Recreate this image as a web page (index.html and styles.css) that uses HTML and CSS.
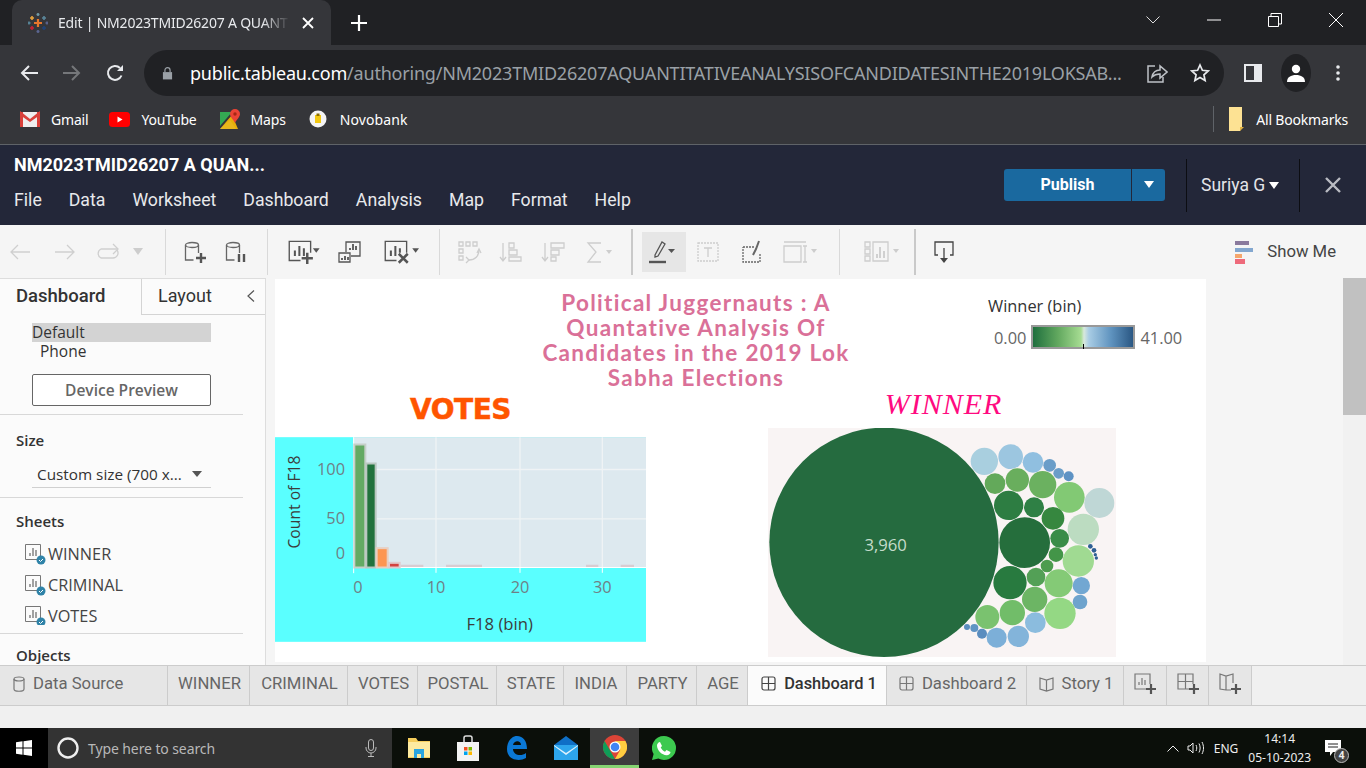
FILE: index.html
```html
<!DOCTYPE html>
<html lang="en">
  <head>
    <meta charset="UTF-8" />
    <title>Edit | NM2023TMID26207 A QUANTITATIVE</title>
    <link rel="stylesheet" href="styles.css">
  </head>
  <body>
    <div class="tabstrip">
      <div class="browser-tab">
        <svg class="favicon" viewBox="0 0 20 20" width="20" height="20" fill="none" stroke-width="1.6">
          <path d="M10 6v8M6 10h8" stroke="#e8762c" stroke-width="2.2"/>
          <path d="M4 3v4M2 5h4" stroke="#e8a33d"/><path d="M16 3v4M14 5h4" stroke="#5b879b"/>
          <path d="M10 0v3M8.5 1.500h3" stroke="#7099a6"/><path d="M1 8.500v3M-.5 10h3" stroke="#59879b"/>
          <path d="M19 8.500v3M17.500 10h3" stroke="#5b6591"/><path d="M4 13v4M2 15h4" stroke="#c72035"/>
          <path d="M16 13v4M14 15h4" stroke="#1f447a"/><path d="M10 17v3M8.500 18.500h3" stroke="#5b6591"/>
        </svg>
        <span class="tab-title">Edit | NM2023TMID26207 A QUANT</span>
        <svg viewBox="0 0 12 12" width="12" height="12" stroke="#fff" stroke-width="1.800"><path d="M1 1l10 10M11 1L1 11"/></svg>
      </div>
      <svg class="new-tab" viewBox="0 0 16 16" width="16" height="16" stroke="#fff" stroke-width="2.200"><path d="M8 0v16M0 8h16"/></svg>
      <div class="window-controls">
        <svg viewBox="0 0 14 8" width="14" height="8" fill="none" stroke="#ddd"><path d="M.5.500L7 7l6.500-6.500"/></svg>
        <svg viewBox="0 0 14 14" width="14" height="14" stroke="#fff"><path d="M0 7h14"/></svg>
        <svg viewBox="0 0 14 14" width="14" height="14" fill="none" stroke="#fff"><path d="M.5 3.500h10v10H.5zM3 3.500V.500h10.500V11h-3"/></svg>
        <svg viewBox="0 0 14 14" width="14" height="14" stroke="#fff"><path d="M0 0l14 14M14 0L0 14"/></svg>
      </div>
    </div>

    <div class="chrome-toolbar">
      <svg viewBox="0 0 18 18" width="18" height="18" fill="none" stroke="#e8eaed" stroke-width="2"><path d="M18 9H2M9 2L2 9l7 7"/></svg>
      <svg viewBox="0 0 18 18" width="18" height="18" fill="none" stroke="#75777a" stroke-width="2"><path d="M0 9h16M9 2l7 7-7 7"/></svg>
      <svg viewBox="0 0 18 18" width="18" height="18" fill="none" stroke="#e8eaed" stroke-width="2"><path d="M15.500 11.500A7 7 0 1 1 14 4"/><path d="M17 1v6h-6" fill="#e8eaed" stroke="none"/></svg>
      <div class="omnibox">
        <svg viewBox="0 0 12 14" width="11" height="14" fill="#9aa0a6"><path d="M1 6h10v8H1z"/><path d="M3.200 6V4a2.800 2.800 0 0 1 5.600 0v2" fill="none" stroke="#9aa0a6" stroke-width="1.300"/></svg>
        <span class="url"><b>public.tableau.com</b>/authoring/NM2023TMID26207AQUANTITATIVEANALYSISOFCANDIDATESINTHE2019LOKSAB...</span>
        <svg class="omni-share" viewBox="0 0 22 22" width="22" height="22" fill="none" stroke="#bdc1c6" stroke-width="1.500"><path d="M9 4H2v16h15v-5"/><path d="M6 15c1-5 4-7 8-7V4l7 6-7 6v-4c-3 0-6 1-8 3z"/></svg>
        <svg viewBox="0 0 20 20" width="20" height="20" fill="none" stroke="#e8eaed" stroke-width="1.700"><path d="M10 2l2.400 5.300 5.800.6-4.300 3.900 1.200 5.700-5.100-2.900-5.100 2.900 1.200-5.700L1.800 7.900l5.800-.6z"/></svg>
      </div>
      <svg class="side-panel" viewBox="0 0 18 18" width="18" height="18"><path fill="#e8eaed" d="M0 0h18v18H0z"/><path fill="#35363a" d="M2 2h8v14H2z"/></svg>
      <div class="avatar"><svg viewBox="0 0 18 18" width="18" height="18" fill="#fff"><circle cx="9" cy="5" r="4.200"/><path d="M0 18c0-5 4-7 9-7s9 2 9 7z"/></svg></div>
      <svg viewBox="0 0 4 16" width="4" height="16" fill="#e8eaed"><circle cx="2" cy="2" r="1.800"/><circle cx="2" cy="8" r="1.800"/><circle cx="2" cy="14" r="1.800"/></svg>
    </div>

    <div class="bookmarks">
      <span class="bookmark bookmark-gmail">
        <svg viewBox="0 0 20 16" width="20" height="16"><path fill="#eee" d="M0 1h20v15H0z"/><path fill="#d8403a" d="M0 1h3v15H0zM17 1h3v15h-3z"/><path fill="#d8403a" d="M0 0l10 8 10-8v4l-10 7L0 4z"/></svg>
        Gmail
      </span>
      <span class="bookmark">
        <svg viewBox="0 0 21 15" width="21" height="15"><rect width="21" height="15" rx="3.500" fill="#f00"/><path fill="#fff" d="M8.500 4.500l5 3-5 3z"/></svg>
        YouTube
      </span>
      <span class="bookmark">
        <svg viewBox="0 0 20 20" width="20" height="20"><path fill="#34a853" d="M0 3h12L0 17z"/><path fill="#4285f4" d="M0 20l10-9 6 9z"/><path fill="#fbbc04" d="M0 20L12 6l6 14z" opacity=".9"/><path fill="#ea4335" d="M15 0a5 5 0 0 1 5 5c0 3-3 5-5 9-2-4-5-6-5-9a5 5 0 0 1 5-5z"/><circle cx="15" cy="5" r="1.700" fill="#a52714"/></svg>
        Maps
      </span>
      <span class="bookmark bookmark-novo">
        <svg viewBox="0 0 18 18" width="18" height="18"><circle cx="9" cy="9" r="8.500" fill="#f4f4f4"/><path fill="#f2c811" d="M6 5h6v8H6z"/><path fill="#8a6d00" d="M7.500 3.500h3V6h-3z"/></svg>
        Novobank
      </span>
      <span class="bookmarks-end">
        <svg viewBox="0 0 16 24" width="16" height="24"><path fill="#fde293" d="M1 0h13v20l-2 4H1z"/><path fill="#e3b341" d="M12 20h4l-4 4z"/></svg>
        All Bookmarks
      </span>
    </div>

    <header class="app-header">
      <div class="app-title-block">
        <div class="app-title">NM2023TMID26207 A QUAN...</div>
        <nav class="app-menu">
          <span>File</span><span>Data</span><span>Worksheet</span><span>Dashboard</span><span>Analysis</span><span>Map</span><span>Format</span><span>Help</span>
        </nav>
      </div>
      <div class="app-actions">
        <div class="publish">
          <span class="publish-main">Publish</span>
          <span class="publish-caret"><i class="caret-white"></i></span>
        </div>
        <div class="user">Suriya G <i class="caret-white"></i></div>
        <svg class="app-close" viewBox="0 0 16 16" width="16" height="16" stroke="#b9bbc2" stroke-width="2.400"><path d="M1 1l14 14M15 1L1 15"/></svg>
      </div>
    </header>

    <div class="tool-row">
      <span class="tool"><svg viewBox="0 0 24 24" fill="none" stroke="#cfcfcf" stroke-width="1.300"><path d="M22 12H3M10 5l-7 7 7 7"/></svg></span>
      <span class="tool"><svg viewBox="0 0 24 24" fill="none" stroke="#cfcfcf" stroke-width="1.300"><path d="M2 12h19M14 5l7 7-7 7"/></svg></span>
      <span class="tool"><svg viewBox="0 0 24 24" fill="none" stroke="#cfcfcf" stroke-width="1.300"><path d="M22 9H6a5 5 0 0 0 0 9h12a5 5 0 0 0 4-8"/><path d="M18 4l5 5-5 5" /></svg></span>
      <span class="tool"><i class="caret-grey"></i></span>
      <span class="tool"><i class="tool-sep"></i></span>
      <span class="tool"><svg viewBox="0 0 24 24" fill="none" stroke="#666" stroke-width="1.300"><ellipse cx="9" cy="5" rx="6.500" ry="2.500"/><path d="M2.500 5v15h8M15.500 5v8"/><path d="M18 13v10M13 18h10" stroke="#555" stroke-width="2.400"/></svg></span>
      <span class="tool"><svg viewBox="0 0 24 24" fill="none" stroke="#666" stroke-width="1.300"><ellipse cx="9" cy="5" rx="6.500" ry="2.500"/><path d="M2.500 5v15h8M15.500 5v8"/><path d="M15 14v8M20 14v8" stroke="#555" stroke-width="2.400"/></svg></span>
      <span class="tool"><i class="tool-sep"></i></span>
      <span class="tool tool-lg"><svg viewBox="0 0 24 24" fill="none" stroke="#555" stroke-width="1.200"><path d="M12 20H2V3h19v10"/><path d="M7 16v-5M11 16V7M15 16v-7" stroke-width="1.800"/><path d="M18 13v10M13 18h10" stroke-width="2.200"/><path d="M23 9h6l-3 4z" fill="#555" stroke="none"/></svg></span>
      <span class="tool"><svg viewBox="0 0 24 24" fill="none" stroke="#555" stroke-width="1.300"><path d="M8 12V2h14v14h-9"/><path d="M12 10V8M15 10V4M18 10V6" stroke-width="1.800"/><path d="M1 13h11v9H1z"/><path d="M4 20v-2M7 20v-4M10 20v-3" stroke-width="1.800"/></svg></span>
      <span class="tool tool-lg"><svg viewBox="0 0 24 24" fill="none" stroke="#555" stroke-width="1.200"><path d="M12 20H2V3h19v10"/><path d="M7 16v-5M11 16V7M15 13V9" stroke-width="1.800"/><path d="M14 14l8 8M22 14l-8 8" stroke-width="2.200"/><path d="M26 9h6l-3 4z" fill="#555" stroke="none"/></svg></span>
      <span class="tool"><i class="tool-sep"></i></span>
      <span class="tool"><svg viewBox="0 0 24 24" fill="none" stroke="#cdcdcd" stroke-width="1.300"><path d="M2 2h4v4H2zM9 2h4v4H9zM16 2h4v4h-4zM2 9h4v4H2zM2 16h4v4H2zM22 10c0 6-4 10-10 10"/><path d="M9 17l3 3-3 3M20 13l2-4 2 4"/></svg></span>
      <span class="tool"><svg viewBox="0 0 24 24" fill="none" stroke="#cdcdcd" stroke-width="1.300"><path d="M4 3v17M1 17l3 4 3-4"/><path d="M10 3h5v5h-5zM10 10h8v5h-8zM10 17h12v4H10z"/></svg></span>
      <span class="tool"><svg viewBox="0 0 24 24" fill="none" stroke="#cdcdcd" stroke-width="1.300"><path d="M4 3v17M1 17l3 4 3-4"/><path d="M10 3h13v5H10zM10 10h8v5h-8zM10 17h5v4h-5z"/></svg></span>
      <span class="tool"><svg viewBox="0 0 24 24" fill="none" stroke="#cdcdcd" stroke-width="1.300"><path d="M16 3H3l8 9-8 10h13"/><path d="M21 10h6l-3 4z" fill="#cdcdcd" stroke="none"/></svg></span>
      <span class="tool"><i class="tool-sep tool-sep-tall"></i></span>
      <span class="tool tool-active"><svg viewBox="0 0 24 24" fill="none" stroke="#555" stroke-width="1.300"><path d="M7 15L14 2l3 2-7 12-3 1z"/><path d="M1 22h17" stroke-width="2.400"/><path d="M20 9h7l-3.500 4z" fill="#555" stroke="none"/></svg></span>
      <span class="tool"><svg viewBox="0 0 24 24" fill="none" stroke="#cdcdcd" stroke-width="1.300" stroke-dasharray="2 1"><path d="M2 3h20v18H2z"/><path d="M8 8h8M12 8v9" stroke-dasharray="none"/></svg></span>
      <span class="tool"><svg viewBox="0 0 24 24" fill="none" stroke="#666" stroke-width="1.300"><path d="M3 7h11M20 14v8H3V7" stroke-dasharray="2 1"/><path d="M19 1l-3 8-3 6" stroke-width="2"/></svg></span>
      <span class="tool"><svg viewBox="0 0 24 24" fill="none" stroke="#cdcdcd" stroke-width="1.300"><path d="M1 2h22M1 6h17v16H1zM22 6v16M20 6h4M20 22h4"/><path d="M28 9h6l-3 4z" fill="#cdcdcd" stroke="none"/></svg></span>
      <span class="tool"><i class="tool-sep"></i></span>
      <span class="tool"><svg viewBox="0 0 24 24" fill="none" stroke="#cdcdcd" stroke-width="1.300"><path d="M0 2h5v5H0zM0 9h5v5H0zM0 16h5v5H0zM8 2h15v19H8z"/><path d="M12 18v-4M15 18V7M19 18v-7" stroke-width="1.800"/><path d="M28 9h6l-3 4z" fill="#cdcdcd" stroke="none"/></svg></span>
      <span class="tool"><i class="tool-sep tool-sep-tall"></i></span>
      <span class="tool"><svg viewBox="0 0 24 24" fill="none" stroke="#444" stroke-width="1.300"><path d="M6 15H3V2h18v13h-3M12 8v12"/><path d="M8 18h8l-4 5z" fill="#444" stroke="none"/></svg></span>
      <span class="show-me">
        <svg viewBox="0 0 20 24" width="20" height="24"><path fill="#8a7a9d" d="M1 1h14v4H1z"/><path fill="#83a7cf" d="M1 8h18v4H1z"/><path fill="#f5a66b" d="M1 14h7v4H1z"/><path fill="#ee6a7b" d="M1 19h10v5H1z"/></svg>
        Show Me
      </span>
    </div>

    <div class="workspace">
      <aside class="sidebar">
        <div class="side-tabs">
          <span class="side-tab side-tab-on">Dashboard</span>
          <span class="side-tab side-tab-off">Layout<svg viewBox="0 0 8 12" width="8" height="12" fill="none" stroke="#555" stroke-width="1.200"><path d="M7 .500L1 6l6 5.500"/></svg></span>
        </div>
        <div class="side-body">
          <div class="device device-on">Default</div>
          <div class="device device-off">Phone</div>
          <div class="preview-btn">Device Preview</div>
        </div>
        <div class="side-section side-size">
          <h4>Size</h4>
          <div class="size-select">Custom size (700 x...<i class="caret-dark"></i></div>
        </div>
        <div class="side-section side-sheets">
          <h4>Sheets</h4>
          <ul class="sheet-list">
            <li><svg viewBox="0 0 22 22" width="22" height="22"><path fill="none" stroke="#777" d="M1.500 1.500h15v15h-15z"/><path stroke="#666" stroke-width="1.200" d="M6 13v-3M9 13V5M12 13V7"/><circle cx="17" cy="17" r="4.500" fill="#2f83a8"/><path fill="none" stroke="#fff" d="M15 17l1.500 1.500L19 16"/></svg>WINNER</li>
            <li><svg viewBox="0 0 22 22" width="22" height="22"><path fill="none" stroke="#777" d="M1.500 1.500h15v15h-15z"/><path stroke="#666" stroke-width="1.200" d="M6 13v-3M9 13V5M12 13V7"/><circle cx="17" cy="17" r="4.500" fill="#2f83a8"/><path fill="none" stroke="#fff" d="M15 17l1.500 1.500L19 16"/></svg>CRIMINAL</li>
            <li><svg viewBox="0 0 22 22" width="22" height="22"><path fill="none" stroke="#777" d="M1.500 1.500h15v15h-15z"/><path stroke="#666" stroke-width="1.200" d="M6 13v-3M9 13V5M12 13V7"/><circle cx="17" cy="17" r="4.500" fill="#2f83a8"/><path fill="none" stroke="#fff" d="M15 17l1.500 1.500L19 16"/></svg>VOTES</li>
          </ul>
        </div>
        <div class="side-section side-objects"><h4>Objects</h4></div>
      </aside>

      <main class="canvas">
        <div class="dashboard">
          <div class="dash-top">
            <h1 class="dash-title">Political Juggernauts : A Quantative Analysis Of Candidates in the 2019 Lok Sabha Elections</h1>
            <div class="legend">
              <div class="legend-name">Winner (bin)</div>
              <div class="legend-scale"><span>0.00</span><i class="legend-bar"></i><span>41.00</span></div>
            </div>
          </div>
          <div class="dash-charts">
            <section class="votes-panel">
              <h2 class="votes-title">VOTES</h2>
              <svg class="votes-chart" viewBox="15 141 1113 614" width="371" height="205">
                <rect x="15" y="141" width="1113" height="614" fill="#5affff"/>
                <rect x="250" y="141" width="878" height="391" fill="#dde9ef"/>
                <path d="M498 141v391M750 141v391M997 141v391M250 238h878M320 386h808" stroke="#eff3f5" stroke-width="4"/>
                <path d="M251 141v408M250 532h878M498 532v16M750 532v16M997 532v16" stroke="#fff" stroke-width="3"/>
                <g stroke-width="6">
                  <rect x="253" y="163" width="33" height="369" fill="#63aa64" stroke="#c5cfc9"/>
                  <rect x="289" y="220" width="28" height="312" fill="#21723d" stroke="#b9c7c0"/>
                  <rect x="320" y="474" width="33" height="58" fill="#fd9652" stroke="#e8cfc2"/>
                  <rect x="357" y="518" width="32" height="14" fill="#d3433f" stroke="#e2c9cb"/>
                  <path d="M392 527h68M528 527h108M948 527h37M1052 527h40" stroke="#d8ccd1" stroke-width="7"/>
                </g>
                <g class="axis-num">
                  <text x="225" y="254" text-anchor="end">100</text>
                  <text x="225" y="402" text-anchor="end">50</text>
                  <text x="225" y="508" text-anchor="end">0</text>
                  <text x="264" y="609" text-anchor="middle">0</text>
                  <text x="498" y="609" text-anchor="middle">10</text>
                  <text x="750" y="609" text-anchor="middle">20</text>
                  <text x="997" y="609" text-anchor="middle">30</text>
                </g>
                <text class="axis-name axis-name-y" transform="translate(91 475) rotate(-90)">Count of F18</text>
                <text class="axis-name" x="689" y="720" text-anchor="middle">F18 (bin)</text>
              </svg>
            </section>
            <section class="winner-panel">
              <h2 class="winner-title">WINNER</h2>
              <svg class="bubbles" viewBox="24 24 1044 687" width="348" height="229">
                <rect x="24" y="24" width="1044" height="687" fill="#f9f4f4"/>
                <circle cx="673" cy="124" r="41" fill="#a9cfdf"/>
                <circle cx="752" cy="110" r="37" fill="#9cc6e0"/>
                <circle cx="819" cy="127" r="31" fill="#90bfe0"/>
                <circle cx="869" cy="136" r="19" fill="#6a9dc8"/>
                <circle cx="896" cy="160" r="16" fill="#6a9dc8"/>
                <circle cx="926" cy="169" r="15" fill="#5e92c4"/>
                <circle cx="372" cy="367" r="344" fill="#256b3f"/>
                <circle cx="705" cy="191" r="31" fill="#63a95a"/>
                <circle cx="772" cy="180" r="35" fill="#69ae5d"/>
                <circle cx="848" cy="194" r="41" fill="#6bb160"/>
                <circle cx="928" cy="232" r="46" fill="#82c974"/>
                <circle cx="1018" cy="249" r="45" fill="#bfd7d6"/>
                <circle cx="746" cy="256" r="44" fill="#2d7d42"/>
                <circle cx="822" cy="262" r="30" fill="#2f8045"/>
                <circle cx="879" cy="295" r="34" fill="#36873f"/>
                <circle cx="970" cy="328" r="47" fill="#bcdcc1"/>
                <circle cx="794" cy="368" r="76" fill="#256e3c"/>
                <circle cx="899" cy="355" r="28" fill="#3a8c48"/>
                <circle cx="888" cy="404" r="22" fill="#439548"/>
                <circle cx="955" cy="423" r="47" fill="#a0da92"/>
                <circle cx="861" cy="438" r="19" fill="#4d9c4e"/>
                <circle cx="750" cy="488" r="50" fill="#287a3f"/>
                <circle cx="828" cy="471" r="28" fill="#53a056"/>
                <circle cx="896" cy="490" r="42" fill="#84ca76"/>
                <circle cx="964" cy="497" r="26" fill="#72a7d2"/>
                <circle cx="960" cy="546" r="22" fill="#6ea3cd"/>
                <circle cx="824" cy="538" r="38" fill="#6cb564"/>
                <circle cx="900" cy="580" r="47" fill="#94d884"/>
                <circle cx="757" cy="578" r="38" fill="#71bd69"/>
                <circle cx="682" cy="591" r="36" fill="#7ac26f"/>
                <circle cx="826" cy="608" r="31" fill="#8bbcde"/>
                <circle cx="775" cy="649" r="32" fill="#83b4da"/>
                <circle cx="710" cy="653" r="30" fill="#7cafd8"/>
                <circle cx="666" cy="641" r="15" fill="#5a8dbf"/>
                <circle cx="643" cy="624" r="12" fill="#6094c4"/>
                <circle cx="621" cy="621" r="9" fill="#5a8dbf"/>
                <circle cx="991" cy="379" r="7" fill="#2e5f94"/>
                <circle cx="1002" cy="391" r="7" fill="#2e5f94"/>
                <circle cx="1006" cy="404" r="5" fill="#2e5f94"/>
                <circle cx="1009" cy="414" r="5" fill="#2e5f94"/>
                <text class="bubble-label" x="377" y="393" text-anchor="middle">3,960</text>
              </svg>
            </section>
          </div>
        </div>
      </main>

      <div class="scrollbar"><div class="scroll-thumb"></div></div>
    </div>

    <div class="sheet-tabs">
      <span class="sheet-tab sheet-tab-source"><svg viewBox="0 0 12 16" width="12" height="16" fill="none" stroke="#777" stroke-width="1.200"><ellipse cx="6" cy="3" rx="5" ry="2"/><path d="M1 3v10c0 3 10 3 10 0V3"/></svg>Data Source</span>
      <span class="sheet-tab sheet-tab-text">WINNER</span>
      <span class="sheet-tab sheet-tab-text">CRIMINAL</span>
      <span class="sheet-tab sheet-tab-text">VOTES</span>
      <span class="sheet-tab sheet-tab-text">POSTAL</span>
      <span class="sheet-tab sheet-tab-text">STATE</span>
      <span class="sheet-tab sheet-tab-text">INDIA</span>
      <span class="sheet-tab sheet-tab-text">PARTY</span>
      <span class="sheet-tab sheet-tab-text">AGE</span>
      <span class="sheet-tab sheet-tab-on"><svg viewBox="0 0 15 15" width="15" height="15" fill="none" stroke="#444" stroke-width="1.200"><rect x="1" y="1" width="13" height="13" rx="2"/><path d="M7.500 1v13M1 7.500h13"/></svg>Dashboard 1</span>
      <span class="sheet-tab sheet-tab-text"><svg viewBox="0 0 15 15" width="15" height="15" fill="none" stroke="#777" stroke-width="1.200"><rect x="1" y="1" width="13" height="13" rx="2"/><path d="M7.500 1v13M1 7.500h13"/></svg>Dashboard 2</span>
      <span class="sheet-tab sheet-tab-text"><svg viewBox="0 0 15 16" width="15" height="16" fill="none" stroke="#777" stroke-width="1.200"><path d="M1 2l6.500 2L14 2v11l-6.500 2L1 13zM7.500 4v11"/></svg>Story 1</span>
      <span class="sheet-tab"><svg viewBox="0 0 22 22" width="22" height="22" fill="none" stroke="#777" stroke-width="1.200"><path d="M12 16H1V1h15v10"/><path d="M5 12v-3M8 12V5M11 12V7"/><path d="M17 11v10M12 16h10" stroke="#555" stroke-width="2.200"/></svg></span>
      <span class="sheet-tab"><svg viewBox="0 0 22 22" width="22" height="22" fill="none" stroke="#777" stroke-width="1.200"><path d="M12 16H1V1h15v10M8.500 1v15M1 8.500h15"/><path d="M17 11v10M12 16h10" stroke="#555" stroke-width="2.200"/></svg></span>
      <span class="sheet-tab"><svg viewBox="0 0 22 22" width="22" height="22" fill="none" stroke="#777" stroke-width="1.200"><path d="M12 17l-5 0-6-1V1l6 2 7-2v9M7 3v14"/><path d="M17 11v10M12 16h10" stroke="#555" stroke-width="2.200"/></svg></span>
    </div>
    <div class="status-bar"></div>

    <footer class="taskbar">
      <span class="start"><svg viewBox="0 0 16 16" width="16" height="16" fill="#fff"><path d="M0 2.300l6.500-1V7.500H0zM7.500 1.200L16 0v7.500H7.500zM0 8.500h6.500v6.200l-6.500-1zM7.500 8.500H16V16l-8.500-1.200z"/></svg></span>
      <div class="search">
        <svg viewBox="0 0 22 22" width="22" height="22" fill="none" stroke="#eee" stroke-width="2.400"><circle cx="11" cy="11" r="9.500"/></svg>
        <span class="search-text">Type here to search</span>
        <svg class="mic" viewBox="0 0 12 18" width="12" height="18" fill="none" stroke="#bbb"><rect x="3.500" y=".5" width="5" height="11" rx="2.500"/><path d="M1 8v1a5 5 0 0 0 10 0V8M6 14v3M3 17.500h6"/></svg>
      </div>
      <div class="task-icons">
        <span class="task-icon"><svg viewBox="0 0 22 24" width="22" height="24"><path fill="#f5cd5c" d="M0 2h8l2 3h12v17H0z"/><path fill="#fdeaa0" d="M0 6h22v15H0z"/><path fill="#2aa4e0" d="M6 13h10v9H6z"/><path fill="#fdeaa0" d="M9 18h4v4H9z"/></svg></span>
        <span class="task-icon"><svg viewBox="0 0 22 26" width="22" height="26"><path fill="none" stroke="#ddd" stroke-width="1.500" d="M7 7V3a2 2 0 0 1 2-2h4a2 2 0 0 1 2 2v4"/><path fill="#f3f3f3" d="M0 7h22v19H0z"/><path fill="#f25022" d="M7 12h3.500v3.500H7z"/><path fill="#7fba00" d="M11.500 12H15v3.500h-3.500z"/><path fill="#00a4ef" d="M7 16.500h3.500V20H7z"/><path fill="#ffb900" d="M11.500 16.500H15V20h-3.500z"/></svg></span>
        <span class="task-icon"><svg viewBox="0 0 20 24" width="20" height="24"><path fill="#0b78d6" d="M10 0c6 0 10 5 10 13H6c0 6 8 8 13 4v5c-7 4-19 2-19-9C0 5 5 0 10 0zM6 9h8c0-5-7-5-8 0z"/></svg></span>
        <span class="task-icon"><svg viewBox="0 0 24 24" width="24" height="24"><path fill="#0f6fc6" d="M12 0l12 9H0z"/><path fill="#2da5ec" d="M0 9h24v15H0z"/><path fill="#dff1fc" d="M0 9l12 8 12-8v1l-12 9-12-9z"/></svg></span>
        <span class="task-icon task-icon-on"><svg viewBox="0 0 24 24" width="24" height="24"><circle cx="12" cy="12" r="12" fill="#db4437"/><path fill="#0f9d58" d="M12 24A12 12 0 0 1 1.600 6l5.200 9h-.1l5.300 9z"/><path fill="#ffcd40" d="M12 6h10.400A12 12 0 0 1 12 24l5.200-9z"/><circle cx="12" cy="12" r="5.500" fill="#fff"/><circle cx="12" cy="12" r="4.300" fill="#4285f4"/></svg></span>
        <span class="task-icon"><svg viewBox="0 0 24 24" width="24" height="24"><path fill="#3cc94f" d="M12 0a12 12 0 0 1 0 24c-2 0-4-.5-5.600-1.400L0 24l1.600-6A12 12 0 0 1 12 0z"/><path fill="#fff" d="M8 6l2 4-1.300 1.500c1 2 2.300 3.300 4.300 4.300L14.500 14l4 2c0 2-2 3.500-4 3.300C10 19 5 14.500 5 9.500 5 8 6.500 6 8 6z"/></svg></span>
      </div>
      <div class="tray">
        <svg viewBox="0 0 12 7" width="12" height="7" fill="none" stroke="#eee"><path d="M.5 6.500L6 1l5.500 5.500"/></svg>
        <svg class="speaker" viewBox="0 0 18 14" width="18" height="14" fill="none" stroke="#eee"><path d="M1 5h2l3-3v10L3 9H1zM9 4c1 2 1 4 0 6M12 2.500c1.500 3 1.500 6 0 9M15 1c2 4 2 8 0 12"/></svg>
        <span class="tray-lang">ENG</span>
        <span class="clock"><span>14:14</span><span>05-10-2023</span></span>
        <span class="notify">
          <svg viewBox="0 0 18 18" width="18" height="18"><path fill="#fff" d="M0 1h16v12H8l-3 4v-4H0z"/><path stroke="#222" d="M3 5h10M3 8h10"/></svg>
          <b class="notify-count">4</b>
        </span>
      </div>
    </footer>
  </body>
</html>
```

FILE: styles.css
```css
* {
  box-sizing: border-box;
}
html,
body {
  height: 768px;
}
body {
  margin: 0;
  overflow: hidden;
  font-family: "Noto Sans", sans-serif;
  background-color: #f0f0f0;
}
h1,
h2,
h4,
ul {
  margin: 0;
  padding: 0;
}

/* browser chrome */
.tabstrip {
  display: flex;
  align-items: flex-start;
  height: 45px;
  padding-left: 12px;
  background-color: #202124;
}
.browser-tab {
  display: flex;
  align-items: center;
  width: 319px;
  height: 45px;
  padding: 0 16px;
  border-radius: 10px 10px 0 0;
  background-color: #35363a;
  color: #e8eaed;
  font-size: 14px;
}
.favicon {
  flex: none;
  margin-right: 10px;
}
.tab-title {
  flex: none;
  width: 232px;
  margin-right: 12px;
  white-space: nowrap;
  letter-spacing: -0.2px;
  -webkit-mask-image: linear-gradient(to right, #000 88%, transparent);
  mask-image: linear-gradient(to right, #000 88%, transparent);
}
.new-tab {
  margin: 15px 0 0 20px;
}
.window-controls {
  display: flex;
  align-items: center;
  gap: 47px;
  margin-left: auto;
  padding: 13px 23px 0 0;
}
.chrome-toolbar {
  display: flex;
  align-items: center;
  height: 55px;
  padding-left: 20px;
  gap: 25px;
  background-color: #35363a;
}
.omnibox {
  display: flex;
  align-items: center;
  flex: none;
  width: 1080px;
  height: 46px;
  margin-left: -5px;
  padding: 0 14px 0 18px;
  border-radius: 23px;
  background-color: #202124;
  color: #9aa0a6;
  font-size: 18px;
}
.url {
  flex: none;
  width: 932px;
  margin-left: 17px;
  white-space: nowrap;
  overflow: hidden;
  letter-spacing: -0.21px;
}
.url b {
  font-weight: 400;
  color: #fff;
}
.omni-share {
  margin-left: 24px;
  margin-right: 22px;
}
.side-panel {
  margin-left: -5px;
}
.avatar {
  display: flex;
  align-items: center;
  justify-content: center;
  width: 30px;
  height: 38px;
  margin-left: -6px;
  border-radius: 50%;
  background-color: #202124;
}
.bookmarks {
  display: flex;
  align-items: center;
  gap: 23px;
  height: 45px;
  padding: 0 0 6px 20px;
  border-bottom: 1px solid #5f6368;
  background-color: #35363a;
  color: #fff;
  font-size: 14px;
  letter-spacing: -0.2px;
}
.bookmark {
  display: flex;
  align-items: center;
  gap: 11px;
}
.bookmark-gmail {
  margin-right: -2px;
}
.bookmark-novo {
  gap: 13px;
  letter-spacing: 0.1px;
}
.bookmarks-end {
  display: flex;
  align-items: center;
  gap: 12px;
  margin-left: auto;
  padding: 0 18px 0 14px;
  height: 26px;
  border-left: 1px solid #5f6368;
}

/* tableau header */
.app-header {
  display: flex;
  justify-content: space-between;
  height: 80px;
  background-color: #232739;
  color: #fff;
}
.app-title-block {
  padding: 8px 0 0 14px;
}
.app-title {
  font-family: Roboto, sans-serif;
  font-size: 18px;
  font-weight: 700;
  line-height: 24px;
}
.app-menu {
  display: flex;
  gap: 27px;
  margin-top: 11px;
  font-family: Roboto, sans-serif;
  font-size: 17.700px;
  line-height: 24px;
  color: #e8e9ec;
}
.app-actions {
  display: flex;
  align-items: center;
}
.publish {
  display: flex;
  width: 161px;
  height: 32px;
  margin-top: -1px;
  border-radius: 3px;
  overflow: hidden;
  background-color: #1a699f;
  font-family: Roboto, sans-serif;
  font-size: 16px;
  font-weight: 700;
  line-height: 32px;
}
.publish-main {
  width: 128px;
  text-align: center;
  border-right: 1px solid #232739;
}
.publish-caret {
  display: flex;
  align-items: center;
  justify-content: center;
  flex: 1;
}
.caret-white {
  display: inline-block;
  border-top: 7px solid #fff;
  border-left: 5px solid transparent;
  border-right: 5px solid transparent;
}
.user {
  display: flex;
  align-items: center;
  gap: 4px;
  width: 114px;
  height: 53px;
  margin-left: 21px;
  padding-left: 14px;
  border-left: 1px solid #0c0d12;
  border-right: 1px solid #0c0d12;
  font-family: Roboto, sans-serif;
  font-size: 17.500px;
  color: #e3e4e8;
}
.app-close {
  margin: 0 25px;
}

/* tableau toolbar */
.tool-row {
  display: grid;
  grid-template-columns: 45px 42px 31px 27px 30px 41px 31px 33px 50px 46px 43px 30px 42px 42px 44px 35px 28px 48px 44px 43px 44px 38px 38px 29px 30px 1fr;
  align-items: center;
  height: 53px;
  padding-left: 8px;
  background-color: #f5f5f5;
}
.tool {
  display: flex;
  align-items: center;
  justify-content: center;
  width: 24px;
  height: 40px;
}
.tool svg {
  flex: none;
  width: 24px;
  height: 24px;
  overflow: visible;
}
.tool-lg svg {
  width: 27px;
  height: 27px;
}
.tool-active {
  width: 44px;
  margin-left: -6px;
  padding-right: 8px;
  background-color: #e6e6e6;
}
.tool-sep {
  width: 1px;
  height: 46px;
  background-color: #d9d9d9;
}
.tool-sep-tall {
  width: 2px;
  background-color: #c9c9c9;
}
.caret-grey {
  border-top: 7px solid #cdcdcd;
  border-left: 5px solid transparent;
  border-right: 5px solid transparent;
}
.show-me {
  display: flex;
  align-items: center;
  gap: 13px;
  justify-self: end;
  padding-right: 30px;
  font-family: Roboto, sans-serif;
  font-size: 16.700px;
  color: #444;
}

/* workspace */
.workspace {
  display: flex;
  height: 387px;
  overflow: hidden;
  background-color: #f5f5f5;
}
.sidebar {
  flex: none;
  width: 266px;
  height: 387px;
  overflow: hidden;
  border-top: 1px solid #ddd;
  border-right: 1px solid #ddd;
  background-color: #fbfbfb;
  font-family: "Open Sans", sans-serif;
  color: #333;
}
.side-tabs {
  display: flex;
  height: 36px;
  font-family: Roboto, sans-serif;
  font-size: 18px;
  line-height: 34px;
}
.side-tab-on {
  width: 142px;
  padding-left: 16px;
  font-weight: 500;
  font-size: 18.500px;
  border-right: 1px solid #d4d4d4;
}
.side-tab-off {
  display: flex;
  justify-content: space-between;
  align-items: center;
  flex: 1;
  padding: 0 10px 2px 16px;
  border-bottom: 1px solid #d4d4d4;
}
.side-body {
  width: 243px;
  padding: 8px 32px 8px;
  border-bottom: 1px solid #d8d8d8;
  font-size: 15.500px;
  line-height: 19px;
}
.device-on {
  background-color: #d3d3d3;
}
.device-off {
  padding-left: 8px;
}
.preview-btn {
  margin-top: 13px;
  height: 32px;
  border: 1px solid #666;
  border-radius: 2px;
  background-color: #fff;
  color: #666;
  font-size: 15.500px;
  font-weight: 600;
  line-height: 30px;
  text-align: center;
}
.side-section {
  width: 243px;
  padding: 16px 0 0 16px;
  border-bottom: 1px solid #d8d8d8;
}
.side-section h4 {
  font-size: 15px;
  font-weight: 600;
  line-height: 18px;
}
.side-size {
  height: 83px;
}
.size-select {
  display: flex;
  align-items: center;
  justify-content: space-between;
  width: 179px;
  height: 26px;
  margin: 13px 0 0 16px;
  padding: 0 9px 2px 5px;
  border-bottom: 1px solid #d0d0d0;
  font-size: 15.300px;
  white-space: nowrap;
}
.caret-dark {
  border-top: 6px solid #555;
  border-left: 5px solid transparent;
  border-right: 5px solid transparent;
}
.side-sheets {
  height: 136px;
  padding-top: 14px;
}
.sheet-list {
  height: 87px;
  margin: 8px 0 0 8px;
  overflow: hidden;
  list-style: none;
  font-size: 16.300px;
  line-height: 18px;
  color: #444;
}
.sheet-list li {
  display: flex;
  align-items: center;
  gap: 2px;
  height: 31px;
}
.side-objects {
  border-bottom: 0;
  padding-top: 12px;
}
.canvas {
  flex: none;
  width: 1077px;
  padding: 1px 0 0 9px;
}
.dashboard {
  width: 931px;
  height: 383px;
  overflow: hidden;
  background-color: #fff;
}
.dash-top {
  display: flex;
  height: 111px;
}
.dash-title {
  flex: none;
  width: 340px;
  margin: 11px 0 0 251px;
  color: #da7098;
  font-family: Lato, sans-serif;
  font-size: 22.500px;
  font-weight: 700;
  line-height: 25px;
  letter-spacing: 1.300px;
  text-align: center;
}
.legend {
  margin: 17px 0 0 122px;
  font-family: "Open Sans", sans-serif;
  font-size: 16.400px;
}
.legend-name {
  color: #333;
  line-height: 20px;
}
.legend-scale {
  display: flex;
  align-items: center;
  gap: 5px;
  margin: 9px 0 0 6px;
  color: #666;
}
.legend-bar {
  position: relative;
  width: 104px;
  height: 24px;
  border: 2px solid #999;
  background-image: linear-gradient(to right, #1f6f3e, #62a85f 25%, #a6dc92 48%, #d8e8dc 51%, #a8cce4 56%, #5f93bf 78%, #2a5783);
}
.legend-bar::after {
  content: "";
  position: absolute;
  left: 50px;
  bottom: -2px;
  width: 1px;
  height: 5px;
  background-color: #000;
}
.dash-charts {
  display: flex;
}
.votes-panel {
  width: 371px;
}
.votes-title {
  height: 47px;
  color: #ff5500;
  font-family: "DejaVu Sans", sans-serif;
  font-size: 28px;
  font-weight: 700;
  line-height: 40px;
  text-align: center;
  letter-spacing: -0.5px;
  -webkit-text-stroke: 0.5px #ff5500;
}
.votes-chart,
.bubbles {
  display: block;
}
.axis-num {
  fill: #6f7f86;
  font-family: "Open Sans", sans-serif;
  font-size: 49px;
}
.axis-name {
  fill: #3c3c3c;
  font-family: "Open Sans", sans-serif;
  font-size: 50px;
}
.axis-name-y {
  font-size: 47px;
}
.winner-panel {
  width: 348px;
  margin-left: 122px;
}
.winner-title {
  height: 38px;
  padding-left: 3px;
  color: #ff0a80;
  font-family: "Liberation Serif", serif;
  font-size: 30px;
  font-style: italic;
  font-weight: 400;
  line-height: 28px;
  letter-spacing: 1px;
  text-align: center;
}
.bubble-label {
  fill: #c5dccb;
  font-family: "Open Sans", sans-serif;
  font-size: 50px;
}
.scrollbar {
  flex: 1;
  background-color: #f1f1f1;
}
.scroll-thumb {
  height: 137px;
  background-color: #c1c1c1;
}

/* sheet tabs */
.sheet-tabs {
  display: grid;
  grid-template-columns: 168px 82px 98px 70px 79px 67px 63px 70px 51px 139px 140px 97px 43px 42px 43px;
  height: 41px;
  border-top: 1px solid #ccc;
  border-bottom: 1px solid #ccc;
  font-family: Roboto, sans-serif;
  font-size: 16.700px;
  background-color: #f0f0f0;
}
.sheet-tab {
  display: flex;
  align-items: center;
  justify-content: center;
  gap: 8px;
  padding-bottom: 4px;
  border-right: 1px solid #ccc;
  background-color: #e6e6e6;
  color: #666;
  white-space: nowrap;
}
.sheet-tab-text {
  padding-left: 2px;
}
.sheet-tab-source {
  justify-content: flex-start;
  padding-left: 13px;
}
.sheet-tab-on {
  padding-left: 4px;
  background-color: #fbfbfb;
  color: #333;
  font-size: 16.400px;
  font-weight: 500;
}
.status-bar {
  height: 22px;
  background-color: #f0f0f0;
}

/* windows taskbar */
.taskbar {
  display: flex;
  align-items: center;
  height: 40px;
  background-color: #0b0f0a;
  color: #eee;
}
.start {
  display: flex;
  align-items: center;
  justify-content: center;
  width: 48px;
  height: 40px;
  background-color: #000;
}
.search {
  display: flex;
  align-items: center;
  width: 344px;
  height: 40px;
  padding-left: 9px;
  background-color: #333;
  color: #b8b8b8;
  font-size: 14px;
}
.search-text {
  margin-left: 9px;
  letter-spacing: -0.1px;
}
.mic {
  margin-left: auto;
  margin-right: 15px;
}
.task-icons {
  display: flex;
  margin-left: 2px;
}
.task-icon {
  display: flex;
  align-items: center;
  justify-content: center;
  width: 49px;
  height: 40px;
}
.task-icon-on {
  background-color: #3d3d3d;
  border-bottom: 3px solid #86d472;
}
.tray {
  display: flex;
  align-items: center;
  margin-left: auto;
  padding-right: 23px;
  font-size: 12px;
}
.speaker {
  margin-left: 8px;
}
.tray-lang {
  margin-left: 9px;
}
.clock {
  display: flex;
  flex-direction: column;
  align-items: center;
  margin-left: 10px;
  line-height: 19px;
}
.notify {
  position: relative;
  display: flex;
  margin-left: 14px;
}
.notify-count {
  position: absolute;
  right: -6px;
  bottom: -6px;
  width: 15px;
  height: 15px;
  border: 1px solid #bbb;
  border-radius: 50%;
  background-color: #444;
  font-size: 10px;
  line-height: 13px;
  text-align: center;
}
```
